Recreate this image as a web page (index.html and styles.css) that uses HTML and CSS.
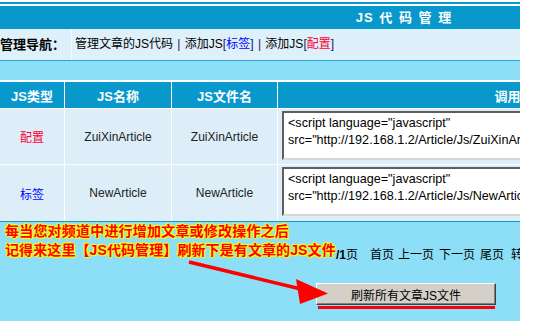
FILE: index.html
```html
<!DOCTYPE html>
<html lang="zh-CN">
<head>
  <meta charset="UTF-8">
  <title>JS代码管理</title>
  <link rel="stylesheet" href="styles.css">
</head>
<body>
<div class="page">
  <div class="sheet">
    <div class="top-rule"></div>
    <div class="title-bar">JS 代 码 管 理</div>
    <div class="nav-row">
      <div class="nav-label">管理导航：</div>
      <div class="nav-links">
        <a href="#">管理文章的JS代码</a>
        <span class="sep">|</span>
        <a href="#">添加JS<span class="br">[</span><span class="blue">标签</span><span class="br">]</span></a>
        <span class="sep">|</span>
        <a href="#">添加JS<span class="br">[</span><span class="red">配置</span><span class="br">]</span></a>
      </div>
    </div>
    <div class="gap-band"></div>

    <table class="js-table">
      <thead>
        <tr>
          <th class="c1">JS类型</th>
          <th class="c2">JS名称</th>
          <th class="c3">JS文件名</th>
          <th class="c4">调用代码</th>
        </tr>
      </thead>
      <tbody>
        <tr>
          <td class="c1 red">配置</td>
          <td class="c2">ZuiXinArticle</td>
          <td class="c3">ZuiXinArticle</td>
          <td class="c4"><textarea readonly>&lt;script language="javascript"
src="http://192.168.1.2/Article/Js/ZuiXinArticle.js"&gt;&lt;/script&gt;</textarea></td>
        </tr>
        <tr>
          <td class="c1 blue">标签</td>
          <td class="c2">NewArticle</td>
          <td class="c3">NewArticle</td>
          <td class="c4"><textarea readonly>&lt;script language="javascript"
src="http://192.168.1.2/Article/Js/NewArticle.js"&gt;&lt;/script&gt;</textarea></td>
        </tr>
      </tbody>
    </table>

    <div class="foot">
      <div class="pager">
        <span><b>/1</b>页</span>
        <span class="p-first">首页</span>
        <span class="p-prev">上一页</span>
        <span class="p-next">下一页</span>
        <span class="p-last">尾页</span>
        <span class="p-go">转到</span>
      </div>
      <div class="btn-row"><button type="button">刷新所有文章JS文件</button></div>
    </div>
  </div>

  <!-- annotation drawn over the screenshot -->
  <div class="note">
    <p>每当您对频道中进行增加文章或修改操作之后</p>
    <p>记得来这里【JS代码管理】刷新下是有文章的JS文件</p>
  </div>
  <svg class="marks" width="520" height="321" viewBox="0 0 520 321">
    <line x1="189" y1="262" x2="303" y2="289.5" stroke="#ff0000" stroke-width="3.5"/>
    <polygon points="296,279 328,293.5 300,304" fill="#ff0000"/>
    <rect x="318" y="306" width="177" height="3" fill="#ff0000"/>
  </svg>
</div>
</body>
</html>
```

FILE: styles.css
```css
body {
  margin: 0;
  background: #fff;
  font-family: "Liberation Sans", "Noto Sans CJK SC", sans-serif;
  font-size: 12px;
  color: #000;
}

.page {
  position: relative;
  width: 520px;
  height: 321px;
  overflow: hidden;
}
.sheet {
  width: 808px;
}

.top-rule {
  height: 2px;
  margin: 2px 0 2px;
  background: #0898cc;
}
.title-bar {
  height: 23px;
  line-height: 23px;
  background: #0898cc;
  color: #fff;
  font-weight: bold;
  font-size: 13px;
  text-align: center;
  letter-spacing: 1px;
  word-spacing: 1px;
}

.nav-row {
  display: flex;
  height: 31px;
  background: #def0fa;
  border-bottom: 1px solid #2aa6d6;
}
.nav-label {
  width: 71px;
  line-height: 31px;
  font-weight: bold;
  font-size: 13px;
  border-right: 1px solid #f4fafd;
}
.nav-links {
  padding-left: 3px;
  line-height: 31px;
}
.nav-links a {
  color: #000;
  text-decoration: none;
}
.nav-links .sep {
  color: #1a1660;
  margin: 0 1px;
}
.br { color: #1a1660; }
.blue { color: #0000ff; }
.red { color: #ff0033; }

.gap-band {
  height: 19px;
  background: #8ddff8;
  border-bottom: 2px solid #fff;
}

.js-table {
  width: 808px;
  border-collapse: collapse;
  table-layout: fixed;
}
.js-table th,
.js-table td {
  padding: 0;
  border-right: 1px solid #fff;
  border-bottom: 1px solid #fff;
  text-align: center;
}
.js-table th {
  height: 26px;
  background: #0898cc;
  color: #fff;
  font-weight: bold;
  font-size: 13px;
}
.js-table th.c4 {
  padding-right: 44px;
}
.js-table td {
  height: 53px;
  background: #ddeef8;
  color: #222;
}
.js-table td.red { color: #ff0033; }
.js-table td.blue { color: #0000ff; }
.js-table tbody tr:last-child td {
  border-bottom: none;
  height: 54px;
}
.c1 { width: 64px; }
.c2 { width: 106px; }
.c3 { width: 105px; }
.js-table td.c4 {
  text-align: left;
  padding: 2px 0 0 4px;
  vertical-align: top;
}
textarea {
  display: block;
  box-sizing: border-box;
  width: 520px;
  height: 49px;
  margin: 0;
  padding: 2px 4px;
  border-style: solid;
  border-width: 2px;
  border-color: #5e5e5e #d6d6d6 #d6d6d6 #5e5e5e;
  background: #fff;
  color: #000;
  font-family: "Liberation Sans", sans-serif;
  font-size: 12.6px;
  line-height: 17px;
  resize: none;
  overflow: hidden;
}

.foot {
  height: 101px;
  background: #8ddff8;
  border-top: 1px solid #1796c8;
}
.pager {
  display: flex;
  padding: 26px 0 0 336px;
  line-height: 14px;
  color: #000;
  white-space: nowrap;
}
.p-first { margin-left: 12px; }
.p-prev { margin-left: 4px; }
.p-next { margin-left: 5px; }
.p-last { margin-left: 5px; }
.p-go { margin-left: 7px; }
.btn-row {
  padding: 21px 0 0 316px;
}
.btn-row button {
  width: 180px;
  height: 22px;
  padding: 0;
  background: #d4d0c8;
  border: 1px solid;
  border-color: #fff #404040 #404040 #fff;
  box-shadow: inset -1px -1px #808080;
  font-family: "Liberation Sans", "Noto Sans CJK SC", sans-serif;
  font-size: 12px;
  color: #000;
}

.note {
  position: absolute;
  left: 5px;
  top: 222px;
  color: #ff0000;
  font-weight: bold;
  font-size: 14px;
  letter-spacing: 0.2px;
  line-height: 19px;
  text-shadow: 0 0 2px #ffff00, 0 0 2px #ffff00, 0 0 2px #ffff00, 1px 1px 1px #ffff00, -1px -1px 1px #ffff00;
}
.note p {
  margin: 0;
}
.note p + p {
  letter-spacing: 0.1px;
}
.marks {
  position: absolute;
  left: 0;
  top: 0;
  pointer-events: none;
}
```
